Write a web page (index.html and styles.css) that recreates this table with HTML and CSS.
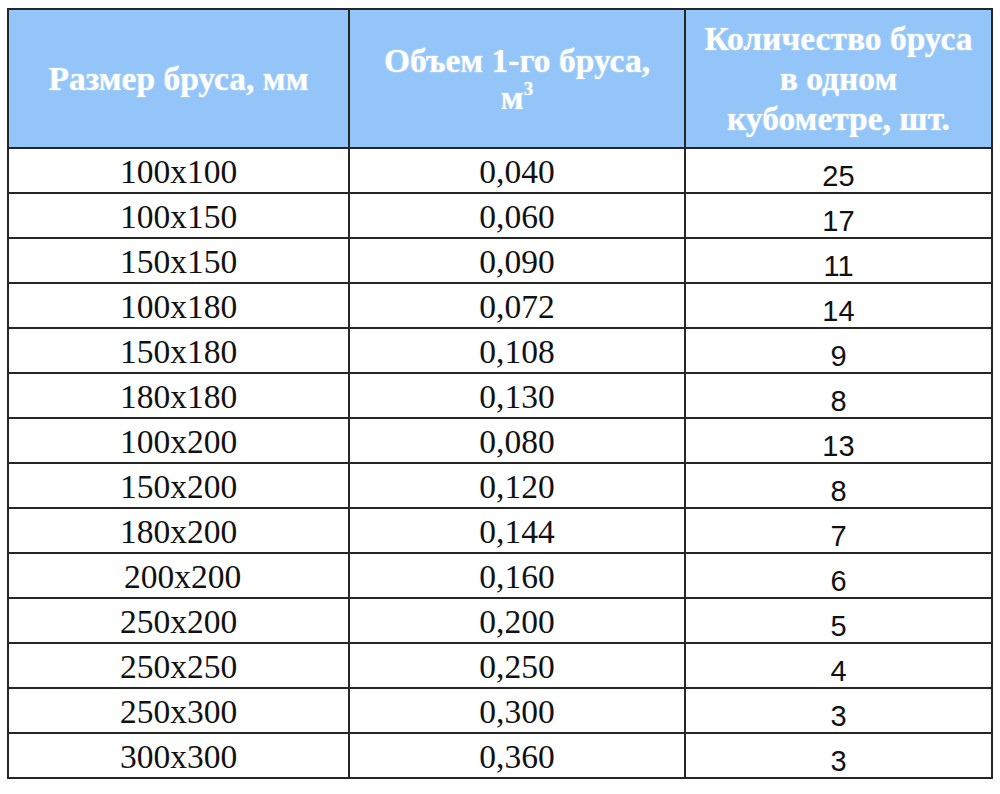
FILE: index.html
```html
<!DOCTYPE html>
<html lang="ru">
<head>
<meta charset="utf-8">
<link rel="stylesheet" href="styles.css">
</head>
<body>
<table class="tbl">
  <colgroup>
    <col class="c1"><col class="c2"><col class="c3">
  </colgroup>
  <thead>
    <tr class="head">
      <th class="h1">Размер бруса, мм</th>
      <th class="h2">Объем 1-го бруса,<br>м<sup>3</sup></th>
      <th class="h3">Количество бруса<br>в одном<br>кубометре, шт.</th>
    </tr>
  </thead>
  <tbody>
    <tr><td>100x100</td><td>0,040</td><td class="n">25</td></tr>
    <tr><td>100x150</td><td>0,060</td><td class="n">17</td></tr>
    <tr><td>150x150</td><td>0,090</td><td class="n">11</td></tr>
    <tr><td>100x180</td><td>0,072</td><td class="n">14</td></tr>
    <tr><td>150x180</td><td>0,108</td><td class="n">9</td></tr>
    <tr><td>180x180</td><td>0,130</td><td class="n">8</td></tr>
    <tr><td>100x200</td><td>0,080</td><td class="n">13</td></tr>
    <tr><td>150x200</td><td>0,120</td><td class="n">8</td></tr>
    <tr><td>180x200</td><td>0,144</td><td class="n">7</td></tr>
    <tr><td class="shift">200x200</td><td>0,160</td><td class="n">6</td></tr>
    <tr><td>250x200</td><td>0,200</td><td class="n">5</td></tr>
    <tr><td>250x250</td><td>0,250</td><td class="n">4</td></tr>
    <tr><td>250x300</td><td>0,300</td><td class="n">3</td></tr>
    <tr><td>300x300</td><td>0,360</td><td class="n">3</td></tr>
  </tbody>
</table>
</body>
</html>
```
FILE: styles.css
```css
html, body {
  margin: 0;
  padding: 0;
  background: #ffffff;
}
body {
  padding: 8px 0 0 7px;
  font-family: "Liberation Serif", "Times New Roman", serif;
  color: #111;
}
.tbl {
  border-collapse: collapse;
  table-layout: fixed;
  width: 984px;
}
.c1 { width: 341px; }
.c2 { width: 336px; }
.c3 { width: 307px; }
.tbl th, .tbl td {
  border: 2px solid #262626;
  padding: 0;
  text-align: center;
}
.head th {
  height: 137px;
  background: #93c5f8;
  color: #ffffff;
  font-weight: bold;
  font-size: 33.5px;
  line-height: 37px;
  vertical-align: middle;
  text-shadow: 0 0 2px rgba(255,255,255,0.6);
}
.head th.h3 { line-height: 40px; }
.h2 sup {
  font-size: 19px;
  line-height: 0;
  vertical-align: 14px;
}
.tbl td {
  height: 41px;
  padding-top: 2px;
  font-size: 33.5px;
  line-height: 36px;
  vertical-align: middle;
}
.tbl td.n {
  font-family: "Liberation Sans", Arial, sans-serif;
  font-size: 29px;
  padding-top: 13px;
  line-height: 29px;
  height: 30px;
  vertical-align: top;
}
.tbl td.shift { padding-left: 8px; }
```
